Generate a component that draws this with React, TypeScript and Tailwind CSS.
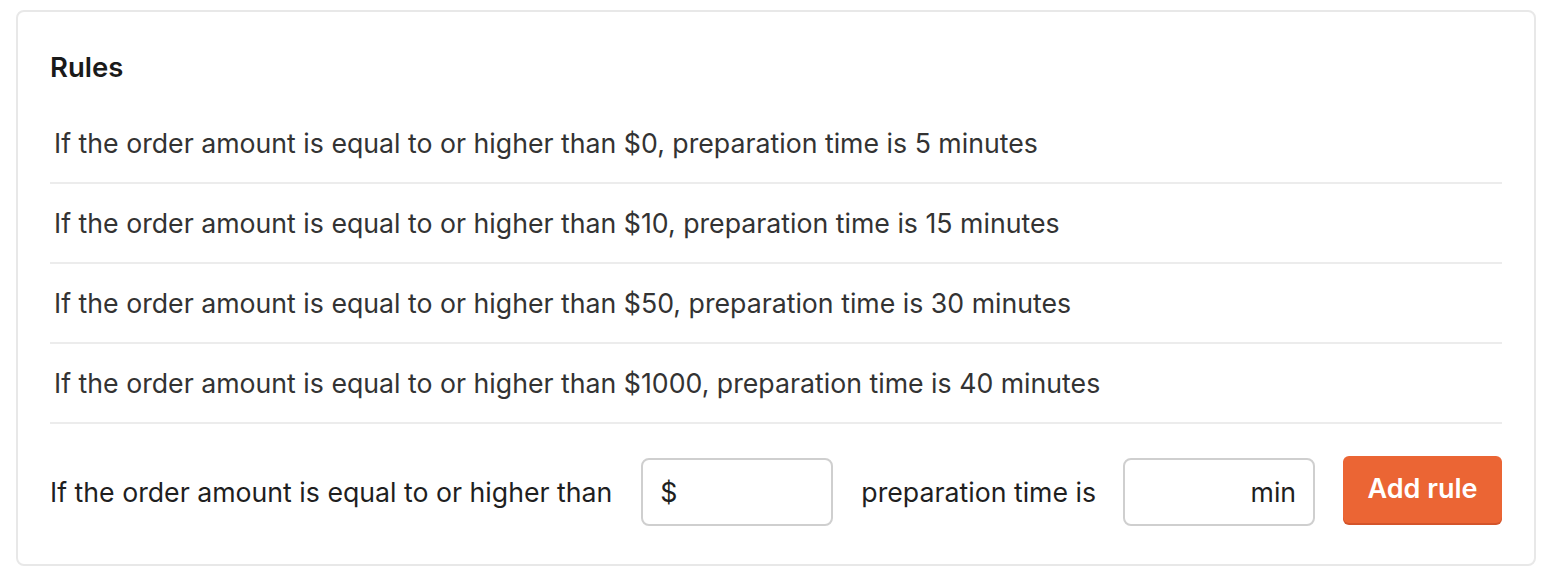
const rules = [
  { amount: 0, minutes: 5 },
  { amount: 10, minutes: 15 },
  { amount: 50, minutes: 30 },
  { amount: 1000, minutes: 40 },
];

export default function App() {
  return (
    <div className="min-h-screen bg-white pl-[16px] pr-[20px] pt-[10px] font-['Inter',sans-serif]">
      <div className="rounded-[8px] border-2 border-[#e8e8e8] bg-white px-[32px] pt-[38px] pb-[36px]">
        {/* Header */}
        <h2 className="mb-5 text-[27.5px] font-semibold leading-[34px] text-[#1a1a1a]">
          Rules
        </h2>

        {/* Existing rules */}
        <ul>
          {rules.map((rule) => (
            <li
              key={rule.amount}
              className="flex h-20 items-center border-b-2 border-[#ececec] px-1 text-[26.7px] text-[#333333]"
            >
              If the order amount is equal to or higher than ${rule.amount},
              preparation time is {rule.minutes} minutes
            </li>
          ))}
        </ul>

        {/* New rule form */}
        <div className="flex items-center pt-[32px] text-[26.7px] text-[#1f1f1f]">
          <span>If the order amount is equal to or higher than</span>
          <div className="ml-[29px] flex h-[68px] w-[192px] items-center rounded-[8px] border-2 border-[#cfcfcf] px-[17px]">
            <span>$</span>
          </div>
          <span className="ml-[28px]">preparation time is</span>
          <div className="ml-[27px] flex h-[68px] w-[192px] items-center justify-end rounded-[8px] border-2 border-[#cfcfcf] px-[17px]">
            <span>min</span>
          </div>
          <button className="mb-[5px] ml-auto h-[67px] w-[159px] rounded-[6px] bg-[#eb6534] text-[27px] font-semibold text-white shadow-[0_2px_0_#d4542a]">
            Add rule
          </button>
        </div>
      </div>
    </div>
  );
}
